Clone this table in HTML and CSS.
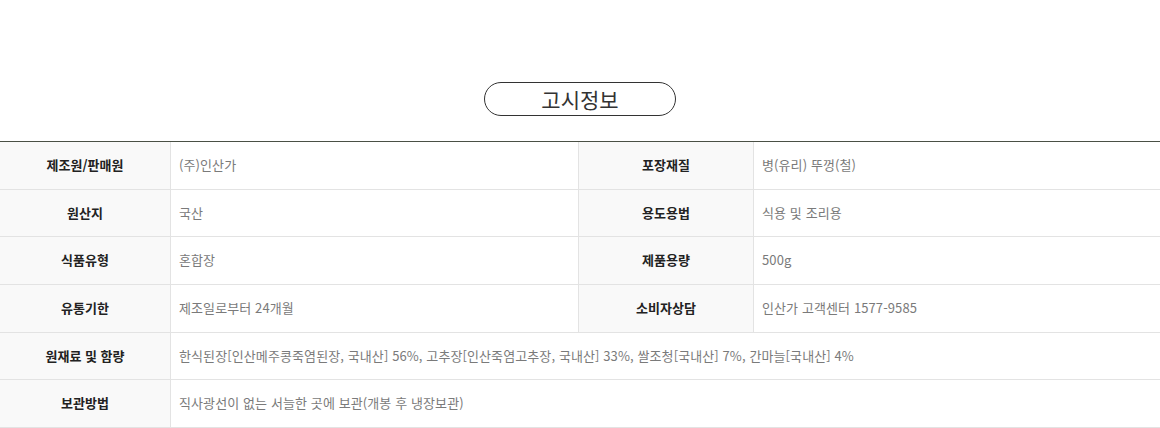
FILE: index.html
```html
<!DOCTYPE html>
<html lang="ko">
<head>
<meta charset="utf-8">
<title>고시정보</title>
<link rel="stylesheet" href="styles.css">
</head>
<body>
<section class="notice">
  <div class="title-wrap"><h2 class="title">고시정보</h2></div>
  <div class="info">
    <div class="th">제조원/판매원</div><div class="td">(주)인산가</div>
    <div class="th">포장재질</div><div class="td last">병(유리) 뚜껑(철)</div>
    <div class="th">원산지</div><div class="td">국산</div>
    <div class="th">용도용법</div><div class="td last">식용 및 조리용</div>
    <div class="th">식품유형</div><div class="td">혼합장</div>
    <div class="th">제품용량</div><div class="td last">500g</div>
    <div class="th">유통기한</div><div class="td">제조일로부터 24개월</div>
    <div class="th">소비자상담</div><div class="td last">인산가 고객센터 1577-9585</div>
    <div class="th">원재료 및 함량</div><div class="td wide last">한식된장[인산메주콩죽염된장, 국내산] 56%, 고추장[인산죽염고추장, 국내산] 33%, 쌀조청[국내산] 7%, 간마늘[국내산] 4%</div>
    <div class="th">보관방법</div><div class="td wide last">직사광선이 없는 서늘한 곳에 보관(개봉 후 냉장보관)</div>
  </div>
</section>
</body>
</html>
```

FILE: styles.css
```css
html, body {
  margin: 0;
  padding: 0;
  background: #fff;
}
body {
  font-family: "Noto Sans CJK KR", "Noto Sans", sans-serif;
  width: 1160px;
}
.notice {
  padding-top: 82px;
}
.title-wrap {
  display: flex;
  justify-content: center;
}
.title {
  margin: 0;
  width: 192px;
  height: 34px;
  box-sizing: border-box;
  border: 1px solid #333;
  border-radius: 17px;
  display: flex;
  align-items: center;
  justify-content: center;
  padding-bottom: 1px;
  font-size: 21px;
  font-weight: 400;
  color: #333;
}
.info {
  margin-top: 25px;
  border-top: 1px solid #4a5045;
  display: grid;
  grid-template-columns: 171px 408px 175px 1fr;
  grid-auto-rows: 47.7px;
}
.th, .td {
  box-sizing: border-box;
  border-bottom: 1px solid #e3e3e3;
  display: flex;
  align-items: center;
  padding-bottom: 2px;
  font-size: 13px;
}
.th {
  background: #f9f9f9;
  border-right: 1px solid #e3e3e3;
  justify-content: center;
  font-weight: 700;
  color: #222;
}
.td {
  padding-left: 8px;
  color: #7a7a7a;
  border-right: 1px solid #e3e3e3;
  letter-spacing: 0.1px;
}
.td.last {
  border-right: 0;
}
.td.wide {
  grid-column: 2 / 5;
}
```
